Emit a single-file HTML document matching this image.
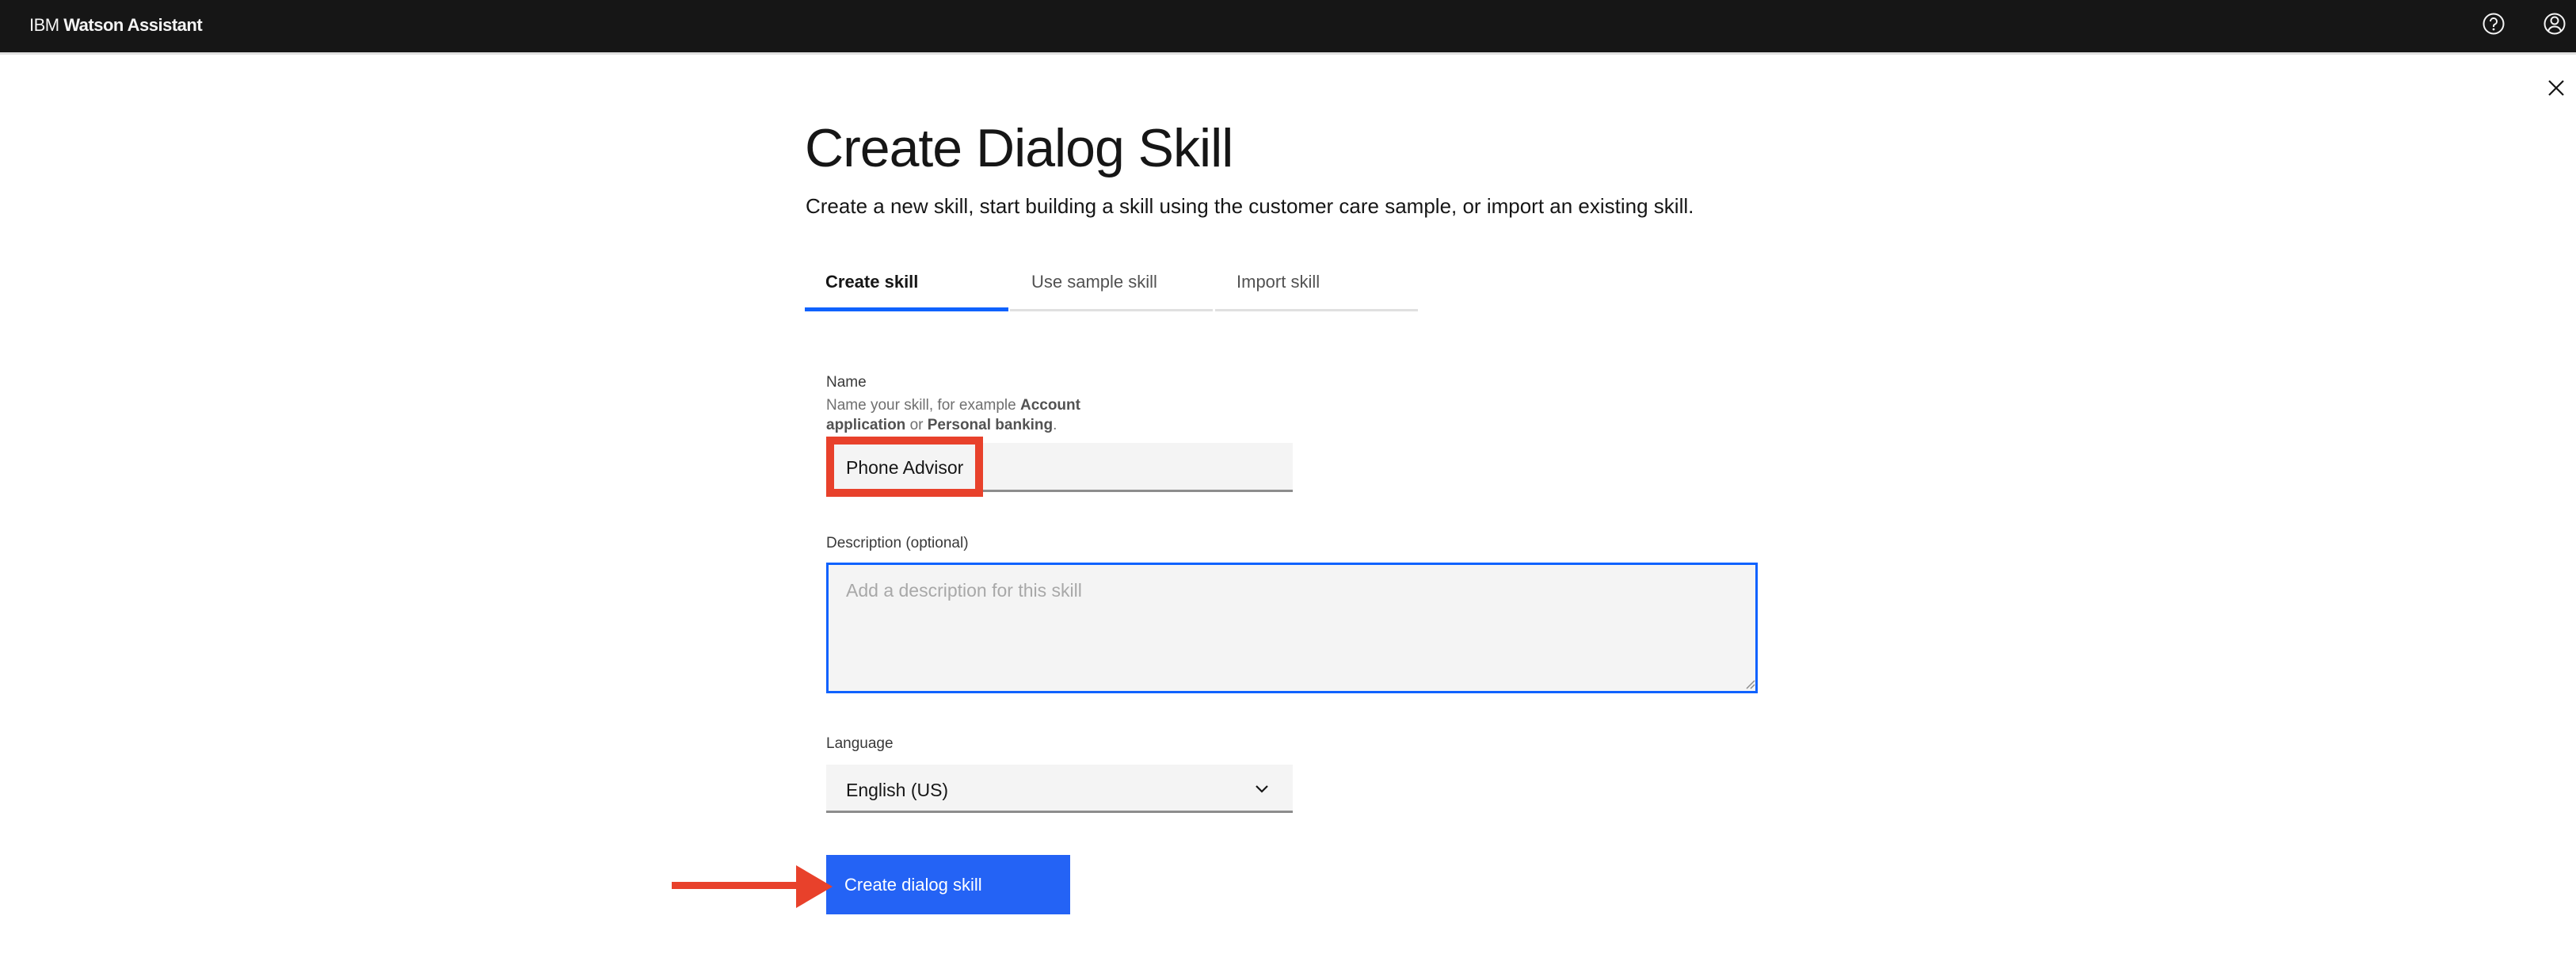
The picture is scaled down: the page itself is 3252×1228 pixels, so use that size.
<!DOCTYPE html>
<html><head><meta charset="utf-8"><style>
*{margin:0;padding:0;box-sizing:border-box}
body{width:3252px;height:1228px;background:#fff;font-family:"Liberation Sans",sans-serif;color:#161616;position:relative;overflow:hidden}
.abs{position:absolute;white-space:nowrap}
</style></head><body>
<div class="abs" style="left:0;top:0;width:3252px;height:66px;background:#161616"></div>
<div class="abs" style="left:0;top:66px;width:3252px;height:3px;background:#e0e0e0"></div>
<div class="abs" style="left:37px;top:19px;font-size:22px;color:#f4f4f4;letter-spacing:-0.5px">IBM <b>Watson Assistant</b></div>
<svg class="abs" style="left:3133px;top:15px" width="30" height="30" viewBox="0 0 30 30"><circle cx="15" cy="15" r="12.5" fill="none" stroke="#f4f4f4" stroke-width="2"/><path d="M11 12a4 4 0 1 1 5.5 3.7c-1 .5-1.5 1.2-1.5 2.3v1" fill="none" stroke="#f4f4f4" stroke-width="2"/><circle cx="15" cy="22" r="1.4" fill="#f4f4f4"/></svg>
<svg class="abs" style="left:3210px;top:15px" width="30" height="30" viewBox="0 0 30 30"><circle cx="15" cy="15" r="12.5" fill="none" stroke="#f4f4f4" stroke-width="2"/><circle cx="15" cy="11" r="4.5" fill="none" stroke="#f4f4f4" stroke-width="2"/><path d="M7 24c1.5-4 4.5-5.5 8-5.5s6.5 1.5 8 5.5" fill="none" stroke="#f4f4f4" stroke-width="2"/></svg>
<svg class="abs" style="left:3216px;top:100px" width="22" height="22" viewBox="0 0 22 22"><path d="M2 2L20 20M20 2L2 20" stroke="#161616" stroke-width="2.2"/></svg>

<div class="abs" style="left:1016px;top:148px;font-size:68px;font-weight:300;letter-spacing:-1px">Create Dialog Skill</div>
<div class="abs" style="left:1017px;top:245px;font-size:26px;letter-spacing:0px">Create a new skill, start building a skill using the customer care sample, or import an existing skill.</div>

<div class="abs" style="left:1042px;top:343px;font-size:22px;font-weight:bold">Create skill</div>
<div class="abs" style="left:1302px;top:343px;font-size:22px;color:#525252">Use sample skill</div>
<div class="abs" style="left:1561px;top:343px;font-size:22px;color:#525252">Import skill</div>
<div class="abs" style="left:1016px;top:388px;width:257px;height:5px;background:#0f62fe"></div>
<div class="abs" style="left:1275px;top:390px;width:256px;height:3px;background:#e0e0e0"></div>
<div class="abs" style="left:1534px;top:390px;width:256px;height:3px;background:#e0e0e0"></div>

<div class="abs" style="left:1043px;top:472px;font-size:19px;color:#393939">Name</div>
<div class="abs" style="left:1043px;top:499px;font-size:19px;color:#6f6f6f;line-height:25px">Name your skill, for example <b style="color:#525252">Account</b><br><b style="color:#525252">application</b> or <b style="color:#525252">Personal banking</b>.</div>
<div class="abs" style="left:1043px;top:559px;width:589px;height:62px;background:#f4f4f4;border-bottom:3px solid #8d8d8d"></div>
<div class="abs" style="left:1043px;top:551px;width:198px;height:76px;border:10px solid #e8412b"></div>
<div class="abs" style="left:1068px;top:577px;font-size:23px">Phone Advisor</div>

<div class="abs" style="left:1043px;top:675px;font-size:19px;color:#393939">Description (optional)</div>
<div class="abs" style="left:1043px;top:710px;width:1176px;height:165px;background:#f4f4f4;border:3px solid #0f62fe"></div>
<div class="abs" style="left:1068px;top:732px;font-size:23px;color:#a8a8a8">Add a description for this skill</div>
<svg class="abs" style="left:2204px;top:858px" width="12" height="12"><path d="M1 11L11 1M6 11L11 6" stroke="#8d8d8d" stroke-width="1.5"/></svg>

<div class="abs" style="left:1043px;top:928px;font-size:19px;color:#393939">Language</div>
<div class="abs" style="left:1043px;top:965px;width:589px;height:61px;background:#f4f4f4;border-bottom:3px solid #8d8d8d"></div>
<div class="abs" style="left:1068px;top:984px;font-size:23px">English (US)</div>
<svg class="abs" style="left:1584px;top:990px" width="18" height="12" viewBox="0 0 18 12"><path d="M2 2L9 9L16 2" fill="none" stroke="#161616" stroke-width="2.2"/></svg>

<div class="abs" style="left:1043px;top:1079px;width:308px;height:75px;background:#2463f5"></div>
<div class="abs" style="left:1066px;top:1104px;font-size:22px;color:#fff">Create dialog skill</div>

<div class="abs" style="left:848px;top:1113px;width:162px;height:9px;background:#e8412b"></div>
<svg class="abs" style="left:1005px;top:1092px" width="48" height="54"><polygon points="0,0 46,27 0,54" fill="#e8412b"/></svg>
</body></html>
